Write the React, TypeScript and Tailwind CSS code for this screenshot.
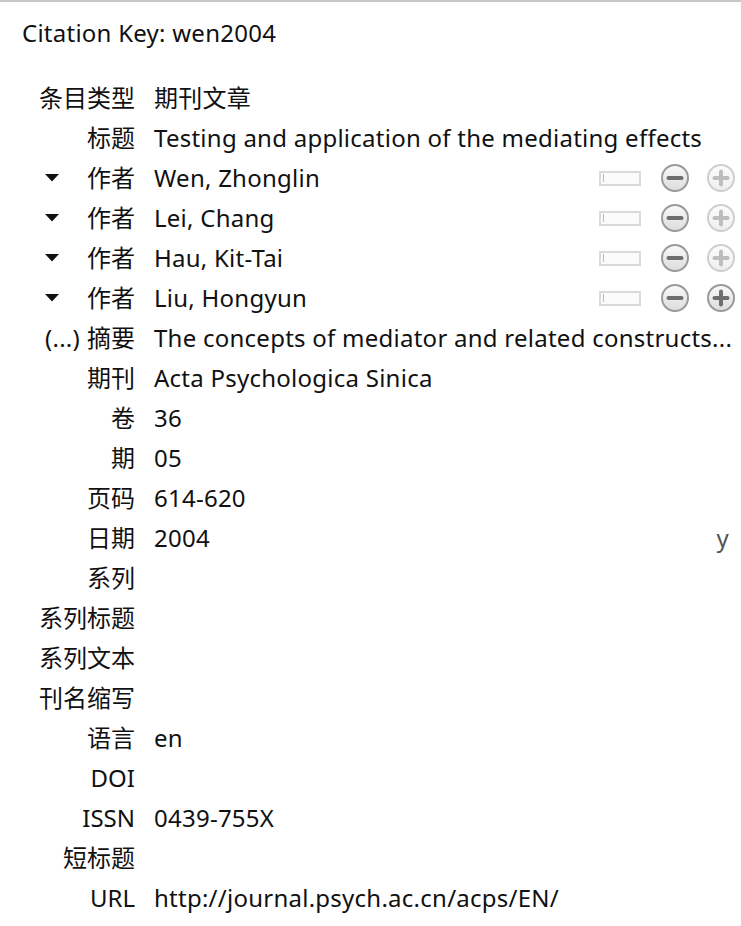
import React from "react";

const font = { fontFamily: '"Noto Sans", "Noto Sans CJK SC", sans-serif' };

function CircleBtn({ kind, enabled }: { kind: "minus" | "plus"; enabled: boolean }) {
  const stroke = enabled ? "#9a9a9a" : "#cfcfcf";
  const bar = enabled ? "#6e6e6e" : "#bdbdbd";
  const id = `g-${kind}-${enabled ? 1 : 0}`;
  return (
    <svg width="30" height="30" viewBox="0 0 30 30">
      <defs>
        <linearGradient id={id} x1="0" y1="0" x2="0" y2="1">
          <stop offset="0" stopColor={enabled ? "#fafafa" : "#fdfdfd"} />
          <stop offset="1" stopColor={enabled ? "#dcdcdc" : "#eeeeee"} />
        </linearGradient>
      </defs>
      <circle cx="15" cy="15" r="13" fill={`url(#${id})`} stroke={stroke} strokeWidth="2" />
      <line x1="8.5" y1="15" x2="21.5" y2="15" stroke={bar} strokeWidth="4" strokeLinecap="round" />
      {kind === "plus" && (
        <line x1="15" y1="8.5" x2="15" y2="21.5" stroke={bar} strokeWidth="4" strokeLinecap="round" />
      )}
    </svg>
  );
}

function Controls({ plusEnabled }: { plusEnabled: boolean }) {
  return (
    <div className="flex items-center pr-[5px]">
      <div className="w-[42px] h-[15px] border-2 border-[#dadada] bg-[#fbfbfb] flex items-center pl-[2px]">
        <div className="w-[1px] h-[8px] bg-[#bdbdbd]" />
      </div>
      <div className="ml-[19px]">
        <CircleBtn kind="minus" enabled={true} />
      </div>
      <div className="ml-[16px]">
        <CircleBtn kind="plus" enabled={plusEnabled} />
      </div>
    </div>
  );
}

type Row = {
  label: string;
  value?: string;
  prefix?: "tri" | "more";
  controls?: boolean;
  plusEnabled?: boolean;
  suffix?: string;
};

const rows: Row[] = [
  { label: "条目类型", value: "期刊文章" },
  { label: "标题", value: "Testing and application of the mediating effects" },
  { label: "作者", value: "Wen, Zhonglin", prefix: "tri", controls: true },
  { label: "作者", value: "Lei, Chang", prefix: "tri", controls: true },
  { label: "作者", value: "Hau, Kit-Tai", prefix: "tri", controls: true },
  { label: "作者", value: "Liu, Hongyun", prefix: "tri", controls: true, plusEnabled: true },
  { label: "摘要", value: "The concepts of mediator and related constructs...", prefix: "more" },
  { label: "期刊", value: "Acta Psychologica Sinica" },
  { label: "卷", value: "36" },
  { label: "期", value: "05" },
  { label: "页码", value: "614-620" },
  { label: "日期", value: "2004", suffix: "y" },
  { label: "系列" },
  { label: "系列标题" },
  { label: "系列文本" },
  { label: "刊名缩写" },
  { label: "语言", value: "en" },
  { label: "DOI" },
  { label: "ISSN", value: "0439-755X" },
  { label: "短标题" },
  { label: "URL", value: "http://journal.psych.ac.cn/acps/EN/" },
];

export default function App() {
  return (
    <div className="w-[741px] h-[926px] bg-white border-t-2 border-[#c8c8c8] text-[#111] overflow-hidden text-[24px] tracking-[0.25px]" style={font}>
      <div className="h-10 mt-[11px] flex items-center pl-[22px]">Citation Key: wen2004</div>
      <div className="mt-[25px] flex flex-col">
        {rows.map((r, i) => (
          <div key={i} className="h-10 flex items-center">
            <div className="w-[135px] flex-none flex items-center justify-end relative">
              {r.prefix === "tri" && (
                <svg className="absolute left-[44px] top-1/2 -translate-y-1/2" width="16" height="10" viewBox="0 0 16 10">
                  <polygon points="1,1 15,1 8,8.5" fill="#111" />
                </svg>
              )}
              {r.prefix === "more" && <span className="mr-[7px]">(...)</span>}
              <span className="whitespace-nowrap tracking-normal">{r.label}</span>
            </div>
            <div className="flex-1 min-w-0 pl-[19px] whitespace-nowrap overflow-hidden">{r.value ?? ""}</div>
            {r.controls && <Controls plusEnabled={!!r.plusEnabled} />}
            {r.suffix && <div className="pr-[12px] text-[#555]">{r.suffix}</div>}
          </div>
        ))}
      </div>
    </div>
  );
}
